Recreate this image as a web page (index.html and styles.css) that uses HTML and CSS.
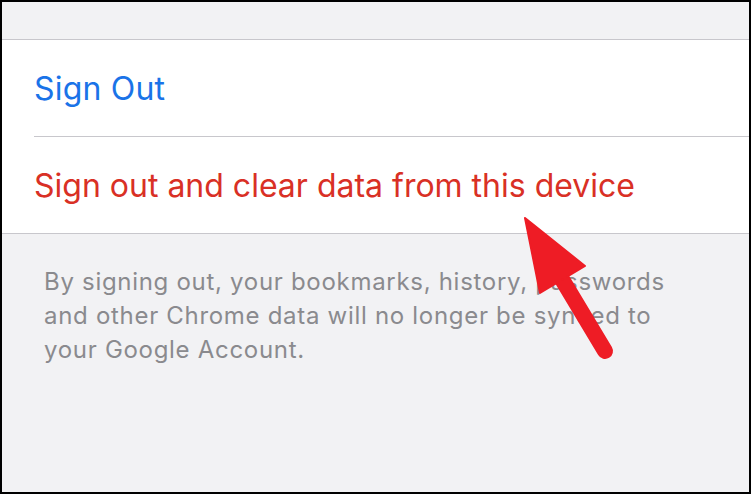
FILE: index.html
```html
<!DOCTYPE html>
<html>
<head>
<meta charset="utf-8">
<link rel="stylesheet" href="styles.css">
</head>
<body>
<div class="frame">
  <div class="top"></div>
  <div class="group">
    <div class="row"><span class="blue">Sign Out</span></div>
    <div class="row"><span class="red">Sign out and clear data from this device</span></div>
  </div>
  <p class="note">By signing out, your bookmarks, history, passwords and other Chrome data will no longer be synced to your Google Account.</p>
  <svg class="arrow" width="751" height="494" viewBox="0 0 751 494">
    <line x1="560" y1="276" x2="605" y2="351" stroke="#ee1c25" stroke-width="16" stroke-linecap="round"/>
    <polygon points="525,218 585,266 540,293" fill="#ee1c25" stroke="#ee1c25" stroke-width="2" stroke-linejoin="round"/>
  </svg>
</div>
</body>
</html>
```
FILE: styles.css
```css
html, body {
  margin: 0;
  padding: 0;
}
.frame {
  position: relative;
  width: 751px;
  height: 494px;
  box-sizing: border-box;
  border: 2px solid #000;
  background: #f2f2f4;
  font-family: Inter, "Noto Sans", sans-serif;
  overflow: hidden;
}
.top {
  height: 37px;
  border-bottom: 1px solid #c8c7cc;
}
.group {
  background: #fff;
  padding-left: 32px;
  border-bottom: 1px solid #c8c7cc;
}
.row {
  height: 96px;
  display: flex;
  align-items: center;
  font-size: 32px;
  letter-spacing: 0.2px;
}
.row + .row {
  border-top: 1px solid #c8c7cc;
}
.blue {
  color: #1a73e8;
}
.red {
  color: #d93025;
  letter-spacing: 0;
}
.note {
  margin: 0;
  width: 640px;
  padding: 31px 0 0 42px;
  font-size: 24px;
  letter-spacing: 0.7px;
  line-height: 34px;
  color: #8a8a8e;
}
.arrow {
  position: absolute;
  left: -2px;
  top: -2px;
}
```
